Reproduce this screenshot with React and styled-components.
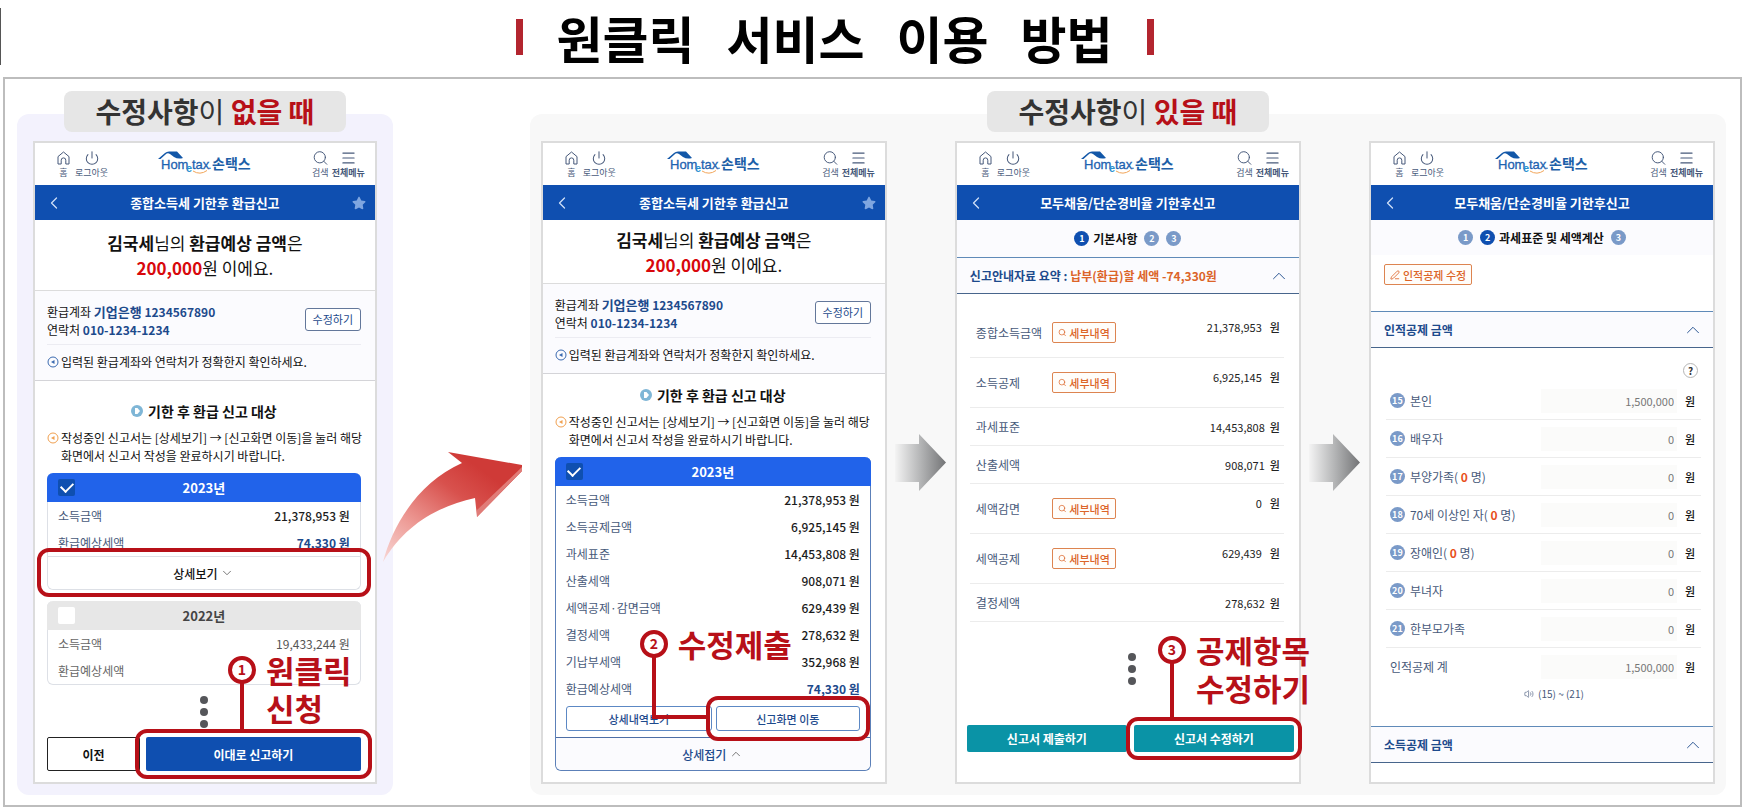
import React from "react";
import styled, { createGlobalStyle, css } from "styled-components";
import { ChevronDown, ChevronLeft, ChevronUp, Menu, Power, Search, PenLine, Volume2 } from "lucide-react";
import { FaStar } from "react-icons/fa";

const colors = {
	blue: "#0f4fb0",
	bright: "#2163ea",
	navy: "#1d4a8c",
	slate: "#47597a",
	line: "#dcdcdc",
	red: "#b71018",
	orange: "#dc6428",
	teal: "#0a93a6",
	tint: "#fbfbfe",
};

const GlobalStyle = createGlobalStyle`
	* {
		box-sizing: border-box;
	}
	body {
		margin: 0;
		background: #fff;
		color: #111;
		font-family: "Noto Sans CJK KR", "Noto Sans", sans-serif;
		font-size: 12px;
		line-height: 18px;
	}
	button, input {
		font-family: inherit;
		margin: 0;
	}
	button {
		cursor: pointer;
	}
	h1, h2, h3, p, dl, dd, ol {
		margin: 0;
		padding: 0;
	}
`;

/* ---------- page ---------- */

const Header = styled.header`
	padding: 8px 0 12px;
`;

const HeaderInner = styled.div`
	height: 57px;
	padding-right: 82px;
	border-left: 1px solid #555;
	display: flex;
	align-items: center;
	justify-content: center;
	gap: 34px;
`;

const Bar = styled.span`
	width: 7px;
	height: 36px;
	background: #b3252f;
`;

const Title = styled.h1`
	display: flex;
	gap: 32px;
	font-size: 50px;
	line-height: 56px;
	font-weight: 700;
	color: #000;
	white-space: nowrap;
`;

const Board = styled.main`
	margin: 0 8px 0 3px;
	padding: 12px 14px 10px 12px;
	border: 2px solid #bdbdbd;
	display: flex;
	align-items: stretch;
`;

const Section = styled.section`
	flex: ${(props) => props.$grow} 1 0;
	min-width: 0;
	display: flex;
	flex-direction: column;
	align-items: center;
`;

const Tab = styled.h2`
	position: relative;
	z-index: 1;
	width: 282px;
	height: 41px;
	margin-bottom: -18px;
	border-radius: 8px;
	background: #e6e6e6;
	color: #333;
	font-size: 28px;
	line-height: 40px;
	text-align: center;
	white-space: nowrap;
`;

const Thin = styled.span`
	font-weight: 400;
`;

const Strong = styled.strong`
	color: ${(props) => props.$color || "inherit"};
	font-weight: 700;
`;

const Panel = styled.div`
	flex: 1;
	width: 100%;
	padding: ${(props) => (props.$gray ? "27px 11px 11px" : "27px 16px 11px")};
	border-radius: 12px;
	background: ${(props) => (props.$gray ? "#f8f8f8" : "#f3f2fd")};
	display: flex;
	align-items: stretch;
`;

const Bend = styled.div`
	position: relative;
	flex: 0 0 137px;
`;

const BendArrow = styled.svg`
	position: absolute;
	z-index: 2;
	left: -10px;
	top: 361px;
`;

const Step = styled.div`
	flex: 0 0 68px;
	display: flex;
	align-items: center;
	justify-content: center;
`;

/* ---------- phone ---------- */

const Phone = styled.article`
	flex: 1 1 0;
	min-width: 0;
	border: 2px solid ${colors.line};
	background: #fff;
`;

const TopBar = styled.div`
	height: 42px;
	padding: 8px 10px 0;
	display: grid;
	grid-template-columns: 1fr auto 1fr;
	align-items: start;
`;

const IconGroup = styled.div`
	display: flex;
	gap: ${(props) => (props.$end ? "3px" : "5px")};
	padding-left: ${(props) => (props.$end ? "0" : "12px")};
	justify-content: ${(props) => (props.$end ? "flex-end" : "flex-start")};
`;

const IconButton = styled.button`
	padding: 0;
	border: 0;
	background: none;
	display: flex;
	flex-direction: column;
	align-items: center;
	gap: 2px;
	color: ${colors.slate};
	font-size: 9px;
	line-height: 12px;
	font-weight: ${(props) => (props.$bold ? 700 : 400)};
`;

const TitleBar = styled.div`
	height: 35px;
	padding: 0 9px;
	background: ${colors.blue};
	color: #fff;
	display: grid;
	grid-template-columns: 20px 1fr 20px;
	align-items: center;
	text-align: center;
`;

const TitleText = styled.h3`
	font-size: 13px;
	line-height: 18px;
	font-weight: 700;
`;

const PlainButton = styled.button`
	padding: 0;
	border: 0;
	background: none;
	display: flex;
	align-items: center;
	justify-content: ${(props) => (props.$end ? "flex-end" : "flex-start")};
	color: ${(props) => props.$color || "#cfe0f7"};
`;

const Hero = styled.p`
	height: ${(props) => (props.$compact ? "64px" : "71px")};
	padding-top: ${(props) => (props.$compact ? "7px" : "10px")};
	border-bottom: 1px solid ${colors.line};
	font-size: 17px;
	line-height: 25px;
	text-align: center;
`;

const Info = styled.div`
	padding: 0 14px 0 12px;
	background: ${colors.tint};
	border-bottom: 1px solid #d4d4d8;
`;

const Account = styled.div`
	height: 54px;
	padding-top: 3px;
	display: flex;
	align-items: center;
	justify-content: space-between;
	border-bottom: 1px solid #ececf2;
	white-space: nowrap;
`;

const AccountText = styled.div`
	padding-top: 4px;
`;

const AccountName = styled.b`
	color: ${colors.navy};
	font-size: 13px;
`;

const AccountNumber = styled.b`
	color: ${colors.navy};
`;

const EditButton = styled.button`
	width: 56px;
	height: 23px;
	padding: 0;
	border: 1px solid #63779a;
	border-radius: 3px;
	background: #fff;
	color: ${colors.navy};
	font-size: 11px;
	line-height: 18px;
`;

const Note = styled.p`
	display: flex;
	gap: 2px;
	padding: ${(props) => props.$pad || "0"};
	white-space: nowrap;
`;

const NoteIcon = styled.svg`
	flex: none;
	margin-top: 3px;
`;

const Content = styled.div`
	padding: ${(props) => (props.$compact ? "11px 14px 11px 12px" : "20px 14px 11px 12px")};
`;

const Target = styled.h3`
	display: flex;
	align-items: center;
	justify-content: center;
	gap: 5px;
	margin-bottom: 8px;
	font-size: 14px;
	line-height: 20px;
`;

const Card = styled.div`
	margin-top: ${(props) => (props.$first ? "8px" : "11px")};
	border: 1px solid ${(props) => props.$edge || "#dde0e6"};
	border-top: 0;
	border-radius: 6px;
`;

const CardHead = styled.label`
	height: 29px;
	margin: 0 -1px;
	padding: 0 11px;
	border-radius: 6px 6px 0 0;
	background: ${(props) => (props.$off ? "#e7e7e7" : colors.bright)};
	color: ${(props) => (props.$off ? "#444" : "#fff")};
	display: grid;
	grid-template-columns: 17px 1fr 17px;
	align-items: center;
	text-align: center;
	font-size: 13px;
	font-weight: 700;
`;

const Check = styled.input`
	appearance: none;
	width: 17px;
	height: 17px;
	border-radius: 2px;
	background: #fff;
	display: grid;
	place-items: center;

	&:checked {
		background: ${colors.blue};
	}
	&:checked::before {
		content: "";
		width: 10px;
		height: 6px;
		margin-bottom: 3px;
		border-left: 2px solid #fff;
		border-bottom: 2px solid #fff;
		transform: rotate(-45deg);
	}
`;

const Rows = styled.dl`
	padding: 0 10px;
`;

const Row = styled.div`
	height: 27px;
	display: flex;
	align-items: center;
	justify-content: space-between;
	color: ${(props) => (props.$off ? "#666" : colors.slate)};
`;

const Amount = styled.dd`
	color: ${(props) => props.$color || "#1c1c1c"};
	font-weight: ${(props) => props.$weight || 500};
`;

const Toggle = styled.button`
	flex: 1;
	height: 33px;
	padding: 0;
	border: 0;
	border-top: 1px solid ${(props) => (props.$open ? "#4d6ea6" : "#dde0e6")};
	border-radius: 0 0 6px 6px;
	background: ${(props) => (props.$open ? colors.tint : "#fff")};
	color: ${(props) => (props.$open ? colors.navy : "#111")};
	display: flex;
	align-items: center;
	justify-content: center;
	gap: 3px;
	font-size: 12px;
	font-weight: 500;
`;

const CardButtons = styled.div`
	display: flex;
	gap: 4px;
	padding: 4px 10px 6px;
`;

const CardButton = styled.button`
	flex: 1;
	height: 25px;
	padding: 0;
	border: 1px solid #5c88c4;
	border-radius: 3px;
	background: #fff;
	color: ${colors.navy};
	font-size: 11px;
	font-weight: 500;
`;

const Dots = styled.div`
	padding: ${(props) => props.$pad};
	display: flex;
	flex-direction: column;
	align-items: center;
	gap: 4px;

	span {
		width: 8px;
		height: 8px;
		border-radius: 50%;
		background: #55565a;
	}
`;

const Actions = styled.div`
	display: flex;
	gap: ${(props) => props.$gap};
	padding: ${(props) => props.$pad || "0"};
`;

const actionLook = {
	outline: css`
		flex: 0 0 93px;
		height: 34px;
		border: 1px solid #222;
		background: #fff;
		color: #111;
	`,
	primary: css`
		height: 34px;
		border: 0;
		background: ${colors.blue};
		color: #fff;
	`,
	teal: css`
		height: 27px;
		border: 0;
		background: ${colors.teal};
		color: #fff;
	`,
};

const Action = styled.button`
	flex: 1;
	padding: 0;
	border-radius: 2px;
	font-size: 12px;
	font-weight: 700;
	${(props) => actionLook[props.$look]}
`;

/* ---------- declaration screens ---------- */

const Steps = styled.ol`
	height: ${(props) => props.$height};
	background: ${colors.tint};
	display: flex;
	align-items: center;
	justify-content: center;
	gap: 7px;
	list-style: none;
`;

const StepItem = styled.li`
	display: flex;
	align-items: center;
	gap: 4px;
	font-weight: 700;
`;

const Dot = styled.span`
	flex: none;
	width: 15px;
	height: 15px;
	border-radius: 50%;
	background: ${(props) => (props.$on ? colors.blue : "#7a9ac8")};
	color: #fff;
	font-size: 9px;
	line-height: 15px;
	font-weight: 700;
	text-align: center;
`;

const Accordion = styled.button`
	width: 100%;
	height: 37px;
	padding: 0 9px 0 13px;
	border: 0;
	border-top: 1px solid #5f8ab8;
	border-bottom: 1px solid #47658c;
	background: ${colors.tint};
	color: ${colors.navy};
	display: flex;
	align-items: center;
	justify-content: space-between;
	font-size: 12px;
	line-height: 18px;
	font-weight: 700;
	white-space: nowrap;
`;

const Summary = styled.dl`
	padding: 14px 15px 0 13px;
`;

const SummaryRow = styled.div`
	height: ${(props) => (props.$tall ? "50px" : "38px")};
	padding: 0 4px 0 6px;
	border-bottom: 1px solid #ececec;
	display: grid;
	grid-template-columns: 76px 64px 1fr;
	align-items: center;
	color: ${colors.slate};
	white-space: nowrap;
`;

const SummaryAmount = styled.dd`
	grid-column: 3;
	padding-bottom: ${(props) => (props.$tall ? "12px" : "0")};
	display: flex;
	justify-content: flex-end;
	gap: ${(props) => (props.$tall ? "8px" : "5px")};
	color: #222;
`;

const Figure = styled.span`
	font-size: 11px;
`;

const Chip = styled.button`
	height: 21px;
	padding: 0 5px;
	border: 1px solid #dd8450;
	border-radius: 2px;
	background: #fffdfa;
	color: ${colors.orange};
	display: inline-flex;
	align-items: center;
	justify-content: center;
	gap: 3px;
	font-size: 11px;
	line-height: 18px;
	font-weight: 500;
	white-space: nowrap;
`;

const ChipRow = styled.div`
	height: 56px;
	padding: 9px 13px;
`;

const Help = styled.button`
	width: 15px;
	height: 15px;
	padding: 0;
	border: 1px solid #b5b5b5;
	border-radius: 50%;
	background: #fff;
	color: #333;
	font-size: 10px;
	line-height: 12px;
	font-weight: 700;
	text-align: center;
`;

const HelpRow = styled.div`
	height: 34px;
	padding: 15px 15px 0;
	display: flex;
	justify-content: flex-end;
`;

const Field = styled.div`
	height: 38px;
	margin: 0 12px 0 15px;
	padding: 0 6px 0 4px;
	border-bottom: 1px solid ${(props) => (props.$last ? "transparent" : "#ececec")};
	display: grid;
	grid-template-columns: 1fr 136px 18px;
	align-items: center;
`;

const FieldLabel = styled.label`
	display: flex;
	align-items: center;
	gap: 5px;
	color: ${colors.slate};
	white-space: nowrap;
`;

const FieldInput = styled.input`
	width: 100%;
	height: 24px;
	padding: 0 3px 0 0;
	border: 0;
	background: #fbfbfa;
	color: #777;
	font-size: 11px;
	text-align: right;
`;

const Unit = styled.span`
	font-size: 11px;
	font-weight: 500;
	text-align: right;
`;

const Range = styled.p`
	height: 40px;
	padding-left: 24px;
	display: flex;
	justify-content: center;
	gap: 4px;
	color: ${colors.slate};
	font-size: 10px;
	line-height: 16px;

	svg {
		margin-top: 3px;
	}
`;

/* ---------- callouts ---------- */

const Spot = styled.div`
	position: relative;
	flex: 1;
	display: flex;
`;

const Ring = styled.span`
	position: absolute;
	z-index: 2;
	inset: ${(props) => props.$inset};
	border: 4px solid ${colors.red};
	border-radius: 12px;
	pointer-events: none;
`;

const CalloutBox = styled.div`
	position: absolute;
	z-index: 3;
	left: ${(props) => props.$left};
	bottom: calc(100% + ${(props) => props.$lift});
	display: flex;
	align-items: flex-start;
	gap: 10px;
`;

const Badge = styled.span`
	position: relative;
	width: 28px;
	height: 28px;
	margin-top: 5px;
	border: 4px solid ${colors.red};
	border-radius: 50%;
	background: #fff;
	color: ${colors.red};
	font-size: 14px;
	line-height: 19px;
	font-weight: 700;
	text-align: center;
`;

const Stem = styled.span`
	position: absolute;
	top: 23px;
	left: 8px;
	width: ${(props) => (props.$elbow ? "54px" : "4px")};
	height: ${(props) => props.$height};
	border-left: 4px solid ${colors.red};
	border-bottom: ${(props) => (props.$elbow ? `4px solid ${colors.red}` : "0")};
`;

const CalloutText = styled.strong`
	color: ${colors.red};
	font-size: 31px;
	line-height: 38px;
	font-weight: 700;
	white-space: pre;
`;

/* ---------- drawings ---------- */

const HomeIcon = () => (
	<svg width="13" height="14" viewBox="0 0 13 14" fill="none" stroke="currentColor">
		<path d="M1 5.6 6.5 1 12 5.6V13H8.8V9.2a2.3 2.3 0 0 0-4.6 0V13H1z" />
	</svg>
);

const Logo = () => (
	<svg width="93" height="26" viewBox="0 0 93 26" role="img" aria-label="Hometax 손택스">
		<path d="M0 8 7 2Q8.500 .5 11 .5H19L25 7Q20 8.500 16 6L12 3Q9.500 1.500 7.500 3.500L2.500 8z" fill="#1257a8" />
		<g fill="#1d62b0" fontFamily="Liberation Sans, sans-serif" fontSize="13">
			<text x="3" y="18" stroke="#1d62b0" strokeWidth=".3">Hom</text>
			<text x="28" y="21" fontSize="11" fontWeight="700" fill="#2a8fd0">e</text>
			<text x="34" y="18" stroke="#1d62b0" strokeWidth=".3">tax</text>
			<text x="50" y="18">.</text>
		</g>
		<path d="M35 20q7 4.500 14-.5" fill="none" stroke="#f2a65a" />
		<text x="54" y="18" fill="#1d5fa8" fontFamily="Noto Sans CJK KR, sans-serif" fontSize="14" fontWeight="700">손택스</text>
	</svg>
);

const MarkerIcon = ({ color }) => (
	<NoteIcon width="12" height="12" viewBox="0 0 12 12" fill="none" stroke={color}>
		<circle cx="6" cy="6" r="5" />
		<path d="M7.500 4v4L4 6z" fill={color} stroke="none" />
	</NoteIcon>
);

const PlayIcon = () => (
	<svg width="12" height="12" viewBox="0 0 12 12">
		<circle cx="6" cy="6" r="6" fill="#7fb6d6" />
		<path d="M4 3h2.500L9 6 6.500 9H4z" fill="#fff" />
	</svg>
);

const GrayArrow = ({ id }) => (
	<Step>
		<svg width="51" height="57" viewBox="0 0 51 57">
			<defs>
				<linearGradient id={id}>
					<stop offset="0" stopColor="#f4f4f4" />
					<stop offset=".5" stopColor="#b4b5b6" />
					<stop offset="1" stopColor="#737476" />
				</linearGradient>
			</defs>
			<path d="M0 10h24V0l27 28.500L24 57V48H0z" fill={`url(#${id})`} />
		</svg>
	</Step>
);

const RedArrow = () => (
	<BendArrow width="140" height="112" viewBox="0 0 140 112">
		<defs>
			<linearGradient id="bend" x1="0" y1="1" x2=".75" y2=".2">
				<stop offset="0" stopColor="#f8d8d6" />
				<stop offset=".35" stopColor="#ee9d98" />
				<stop offset=".75" stopColor="#d8514d" />
				<stop offset="1" stopColor="#cf3a37" />
			</linearGradient>
		</defs>
		<path d="M0 110C10 72 36 30 79 11L65 0 139 13V19L94 65 92 46C56 54 22 72 0 110z" fill="url(#bend)" />
		<path d="M139 15V19L94 65V58z" fill="#e07c78" />
	</BendArrow>
);

/* ---------- shared pieces ---------- */

const Callout = ({ number, text, left, lift, stem, elbow }) => (
	<CalloutBox $left={left} $lift={lift}>
		<Badge>
			{number}
			<Stem $height={stem} $elbow={elbow} />
		</Badge>
		<CalloutText>{text}</CalloutText>
	</CalloutBox>
);

const PhoneHeader = ({ title, star }) => (
	<>
		<TopBar>
			<IconGroup>
				<IconButton>
					<HomeIcon />홈
				</IconButton>
				<IconButton>
					<Power size={14} viewBox="1 1 22 22" strokeWidth={1.6} />
					로그아웃
				</IconButton>
			</IconGroup>
			<Logo />
			<IconGroup $end>
				<IconButton>
					<Search size={15} height={14} viewBox="2 2 20 20" strokeWidth={1.4} />
					검색
				</IconButton>
				<IconButton $bold>
					<Menu size={15} height={14} viewBox="3 2 18 20" strokeWidth={1.6} />
					전체메뉴
				</IconButton>
			</IconGroup>
		</TopBar>
		<TitleBar>
			<PlainButton aria-label="뒤로">
				<ChevronLeft size={20} strokeWidth={1.5} />
			</PlainButton>
			<TitleText>{title}</TitleText>
			{star && (
				<PlainButton aria-label="즐겨찾기" $end $color="#7fa6e0">
					<FaStar size={14} />
				</PlainButton>
			)}
		</TitleBar>
	</>
);

const RefundIntro = ({ compact }) => (
	<>
		<Hero $compact={compact}>
			<Strong>김국세</Strong>님의 <Strong>환급예상 금액</Strong>은
			<br />
			<Strong $color="#d8080c">200,000</Strong>원 이에요.
		</Hero>
		<Info>
			<Account>
				<AccountText>
					환급계좌 <AccountName>기업은행</AccountName> <AccountNumber>1234567890</AccountNumber>
					<br />
					연락처 <AccountNumber>010-1234-1234</AccountNumber>
				</AccountText>
				<EditButton>수정하기</EditButton>
			</Account>
			<Note $pad="8px 0 9px">
				<MarkerIcon color="#3a6ab0" />
				입력된 환급계좌와 연락처가 정확한지 확인하세요.
			</Note>
		</Info>
	</>
);

const TargetNotice = () => (
	<>
		<Target>
			<PlayIcon />
			기한 후 환급 신고 대상
		</Target>
		<Note>
			<MarkerIcon color="#f0a050" />
			<span>
				작성중인 신고서는 [상세보기] → [신고화면 이동]을 눌러 해당
				<br />
				화면에서 신고서 작성을 완료하시기 바랍니다.
			</span>
		</Note>
	</>
);

const AmountRow = ({ label, value, blue, off }) => (
	<Row $off={off}>
		<dt>{label}</dt>
		{value && (
			<Amount $color={blue ? colors.navy : off && "#555"} $weight={blue ? 700 : off && 400}>
				{value} 원
			</Amount>
		)}
	</Row>
);

const MoreDots = ({ pad }) => (
	<Dots $pad={pad}>
		<span />
		<span />
		<span />
	</Dots>
);

/* ---------- screens ---------- */

const detailRows = [
	{ label: "소득금액", value: "21,378,953" },
	{ label: "소득공제금액", value: "6,925,145" },
	{ label: "과세표준", value: "14,453,808" },
	{ label: "산출세액", value: "908,071" },
	{ label: "세액공제·감면금액", value: "629,439" },
	{ label: "결정세액", value: "278,632" },
	{ label: "기납부세액", value: "352,968" },
	{ label: "환급예상세액", value: "74,330", blue: true },
];

const summaryRows = [
	{ label: "종합소득금액", value: "21,378,953", detail: true },
	{ label: "소득공제", value: "6,925,145", detail: true },
	{ label: "과세표준", value: "14,453,808" },
	{ label: "산출세액", value: "908,071" },
	{ label: "세액감면", value: "0", detail: true },
	{ label: "세액공제", value: "629,439", detail: true },
	{ label: "결정세액", value: "278,632" },
];

const deductions = [
	{ no: 15, label: "본인", value: "1,500,000" },
	{ no: 16, label: "배우자", value: "0" },
	{ no: 17, label: "부양가족", value: "0", count: true },
	{ no: 18, label: "70세 이상인 자", value: "0", count: true },
	{ no: 19, label: "장애인", value: "0", count: true },
	{ no: 20, label: "부녀자", value: "0" },
	{ no: 21, label: "한부모가족", value: "0" },
	{ label: "인적공제 계", value: "1,500,000" },
];

const OneClickScreen = () => (
	<Phone>
		<PhoneHeader title="종합소득세 기한후 환급신고" star />
		<RefundIntro />
		<Content>
			<TargetNotice />
			<Card $first>
				<CardHead>
					<Check type="checkbox" defaultChecked />
					2023년
				</CardHead>
				<Rows>
					<AmountRow label="소득금액" value="21,378,953" />
					<AmountRow label="환급예상세액" value="74,330" blue />
				</Rows>
				<Spot>
					<Toggle>
						상세보기
						<ChevronDown size={14} strokeWidth={1.5} color="#666" />
					</Toggle>
					<Ring $inset="-8px -11px" />
				</Spot>
			</Card>
			<Card>
				<CardHead $off>
					<Check type="checkbox" />
					2022년
				</CardHead>
				<Rows>
					<AmountRow label="소득금액" value="19,433,244" off />
					<AmountRow label="환급예상세액" off />
				</Rows>
			</Card>
			<MoreDots pad="11px 0 9px" />
			<Actions $gap="6px">
				<Action $look="outline">이전</Action>
				<Spot>
					<Action $look="primary">이대로 신고하기</Action>
					<Ring $inset="-8px -11px" />
					<Callout number="1" text={"원클릭\n신청"} left="82px" lift="10px" stem="50px" />
				</Spot>
			</Actions>
		</Content>
	</Phone>
);

const DetailScreen = () => (
	<Phone>
		<PhoneHeader title="종합소득세 기한후 환급신고" star />
		<RefundIntro compact />
		<Content $compact>
			<TargetNotice />
			<Card $first $edge="#5c80b8">
				<CardHead>
					<Check type="checkbox" defaultChecked />
					2023년
				</CardHead>
				<Rows>
					{detailRows.map((row) => (
						<AmountRow key={row.label} {...row} />
					))}
				</Rows>
				<CardButtons>
					<CardButton>상세내역보기</CardButton>
					<Spot>
						<CardButton>신고화면 이동</CardButton>
						<Ring $inset="-10px" />
						<Callout number="2" text="수정제출" left="-76px" lift="43px" stem="62px" elbow />
					</Spot>
				</CardButtons>
				<Actions>
					<Toggle $open>
						상세접기
						<ChevronUp size={14} strokeWidth={1.5} color="#666" />
					</Toggle>
				</Actions>
			</Card>
		</Content>
	</Phone>
);

const SummaryScreen = () => (
	<Phone>
		<PhoneHeader title="모두채움/단순경비율 기한후신고" />
		<Steps $height="37px">
			<StepItem>
				<Dot $on>1</Dot>
				기본사항
			</StepItem>
			<StepItem>
				<Dot>2</Dot>
			</StepItem>
			<StepItem>
				<Dot>3</Dot>
			</StepItem>
		</Steps>
		<Accordion>
			<span>
				신고안내자료 요약 : <Strong $color={colors.orange}>납부(환급)할 세액 -74,330원</Strong>
			</span>
			<ChevronUp size={22} strokeWidth={1} />
		</Accordion>
		<Summary>
			{summaryRows.map((row) => (
				<SummaryRow key={row.label} $tall={row.detail}>
					<dt>{row.label}</dt>
					{row.detail && (
						<Chip>
							<Search size={9} strokeWidth={2} />
							세부내역
						</Chip>
					)}
					<SummaryAmount $tall={row.detail}>
						<Figure>{row.value}</Figure>
						<Unit>원</Unit>
					</SummaryAmount>
				</SummaryRow>
			))}
		</Summary>
		<MoreDots pad="31px 0 40px 8px" />
		<Actions $gap="7px" $pad="0 5px 0 10px">
			<Action $look="teal">신고서 제출하기</Action>
			<Spot>
				<Action $look="teal">신고서 수정하기</Action>
				<Ring $inset="-8px" />
				<Callout number="3" text={"공제항목\n수정하기"} left="24px" lift="18px" stem="56px" />
			</Spot>
		</Actions>
	</Phone>
);

const DeductionScreen = () => (
	<Phone>
		<PhoneHeader title="모두채움/단순경비율 기한후신고" />
		<Steps $height="35px">
			<StepItem>
				<Dot>1</Dot>
			</StepItem>
			<StepItem>
				<Dot $on>2</Dot>
				과세표준 및 세액계산
			</StepItem>
			<StepItem>
				<Dot>3</Dot>
			</StepItem>
		</Steps>
		<ChipRow>
			<Chip>
				<PenLine size={10} strokeWidth={2} />
				인적공제 수정
			</Chip>
		</ChipRow>
		<Accordion>
			인적공제 금액
			<ChevronUp size={22} strokeWidth={1} />
		</Accordion>
		<HelpRow>
			<Help aria-label="도움말">?</Help>
		</HelpRow>
		{deductions.map((item) => (
			<Field key={item.label} $last={!item.no}>
				<FieldLabel htmlFor={`deduction-${item.no || "sum"}`}>
					{item.no && <Dot>{item.no}</Dot>}
					<span>
						{item.label}
						{item.count && (
							<>
								( <Strong $color="#e8501c">0</Strong> 명)
							</>
						)}
					</span>
				</FieldLabel>
				<FieldInput id={`deduction-${item.no || "sum"}`} value={item.value} readOnly />
				<Unit>원</Unit>
			</Field>
		))}
		<Range>
			<Volume2 size={10} strokeWidth={1.5} />
			(15) ~ (21)
		</Range>
		<Accordion>
			소득공제 금액
			<ChevronUp size={22} strokeWidth={1} />
		</Accordion>
	</Phone>
);

const App = () => (
	<>
		<GlobalStyle />
		<Header>
			<HeaderInner>
				<Bar />
				<Title>
					<span>원클릭</span> <span>서비스</span> <span>이용</span> <span>방법</span>
				</Title>
				<Bar />
			</HeaderInner>
		</Header>
		<Board>
			<Section $grow={376}>
				<Tab>
					수정사항<Thin>이</Thin> <Strong $color={colors.red}>없을 때</Strong>
				</Tab>
				<Panel>
					<OneClickScreen />
				</Panel>
			</Section>
			<Bend>
				<RedArrow />
			</Bend>
			<Section $grow={1197}>
				<Tab>
					수정사항<Thin>이</Thin> <Strong $color={colors.red}>있을 때</Strong>
				</Tab>
				<Panel $gray>
					<DetailScreen />
					<GrayArrow id="toSummary" />
					<SummaryScreen />
					<GrayArrow id="toDeduction" />
					<DeductionScreen />
				</Panel>
			</Section>
		</Board>
	</>
);

export default App;
